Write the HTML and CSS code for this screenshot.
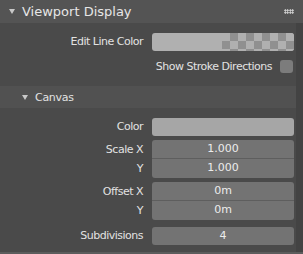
FILE: index.html
```html
<!DOCTYPE html>
<html lang="en">
<head>
	<meta charset="UTF-8">
	<title>Viewport Display</title>
	<link rel="stylesheet" href="styles.css">
</head>
<body>
	<div class="panel">
		<div class="panel-head">
			<span class="tri"></span>
			<span class="panel-title">Viewport Display</span>
			<span class="grip"></span>
		</div>
		<div class="panel-main">
			<div class="panel-body">
				<div class="row">
					<span class="label">Edit Line Color</span>
					<div class="field color-alpha">
						<span class="swatch"></span>
						<span class="checker"></span>
					</div>
				</div>
				<div class="row check-row">
					<span class="label">Show Stroke Directions</span>
					<span class="checkbox"></span>
				</div>
			</div>
			<div class="sub-head">
				<span class="tri"></span>
				<span class="sub-title">Canvas</span>
			</div>
			<div class="panel-body sub-body">
				<div class="row">
					<span class="label">Color</span>
					<div class="field color-plain"></div>
				</div>
				<div class="group">
					<div class="row">
						<span class="label">Scale X</span>
						<div class="field num top">1.000</div>
					</div>
					<div class="row">
						<span class="label">Y</span>
						<div class="field num bottom">1.000</div>
					</div>
				</div>
				<div class="group">
					<div class="row">
						<span class="label">Offset X</span>
						<div class="field num top">0m</div>
					</div>
					<div class="row">
						<span class="label">Y</span>
						<div class="field num bottom">0m</div>
					</div>
				</div>
				<div class="group last">
					<div class="row">
						<span class="label">Subdivisions</span>
						<div class="field num">4</div>
					</div>
				</div>
			</div>
		</div>
	</div>
</body>
</html>
```

FILE: styles.css
```css
html{
	background: #4a4a4a;
}
body{
	margin: 0;
	font-family: "DejaVu Sans", sans-serif;
	font-size: 11px;
	color: #e2e2e2;
}
.panel{
	width: 303px;
	height: 252px;
	background: #4a4a4a;
	border-bottom: 2px solid #5c5c5c;
	display: flex;
	flex-direction: column;
}
.panel-head{
	height: 23px;
	flex-shrink: 0;
	background: #545454;
	display: flex;
	align-items: center;
	padding-left: 9px;
	padding-right: 9px;
}
.tri{
	width: 0;
	height: 0;
	border-left: 3px solid transparent;
	border-right: 3px solid transparent;
	border-top: 5px solid #c8c8c8;
}
.panel-title{
	margin-left: 7px;
	font-size: 13px;
	color: #e6e6e6;
	flex: 1;
}
.grip{
	width: 10px;
	height: 5px;
	background: radial-gradient(circle, #d8d8d8 0.9px, transparent 1.1px) 0 0/2.5px 2.5px;
}
.panel-main{
	flex: 1;
	margin-right: 7px;
	box-shadow: 7px 0 0 #434343;
}
.panel-body{
	padding: 9px 2px 0 0;
}
.row{
	display: flex;
	align-items: center;
	height: 19px;
}
.label{
	width: 143px;
	text-align: right;
	padding-right: 9px;
	letter-spacing: -0.5px;
}
.field{
	width: 142px;
	height: 18px;
	border-radius: 3px;
}
.color-alpha{
	display: flex;
	background: #b0b0b0;
	overflow: hidden;
}
.swatch{
	width: 70px;
}
.checker{
	flex: 1;
	background-color: #b0b0b0;
	background-image:
		linear-gradient(45deg, #909090 25%, transparent 25%, transparent 75%, #909090 75%),
		linear-gradient(45deg, #909090 25%, transparent 25%, transparent 75%, #909090 75%);
	background-size: 16px 16px;
	background-position: 0 0, 8px 8px;
}
.check-row{
	margin-top: 6px;
}
.check-row .label{
	width: auto;
	flex: 1;
	padding-right: 8px;
}
.checkbox{
	width: 13px;
	height: 13px;
	border-radius: 3px;
	background: #7c7c7c;
	margin-right: 1px;
}
.sub-head{
	margin-top: 10px;
	height: 22px;
	background: #515151;
	display: flex;
	align-items: center;
	padding-left: 22px;
}
.sub-title{
	margin-left: 7px;
	letter-spacing: -0.3px;
}
.sub-body{
	padding-top: 9px;
}
.color-plain{
	background: #a6a6a6;
}
.group{
	margin-top: 4px;
}
.group.last{
	margin-top: 6px;
}
.num{
	background: #737373;
	color: #ececec;
	text-align: center;
	line-height: 18px;
}
.num.top{
	border-radius: 3px 3px 0 0;
	border-bottom: 1px solid #5e5e5e;
}
.num.bottom{
	border-radius: 0 0 3px 3px;
	height: 19px;
}
```
